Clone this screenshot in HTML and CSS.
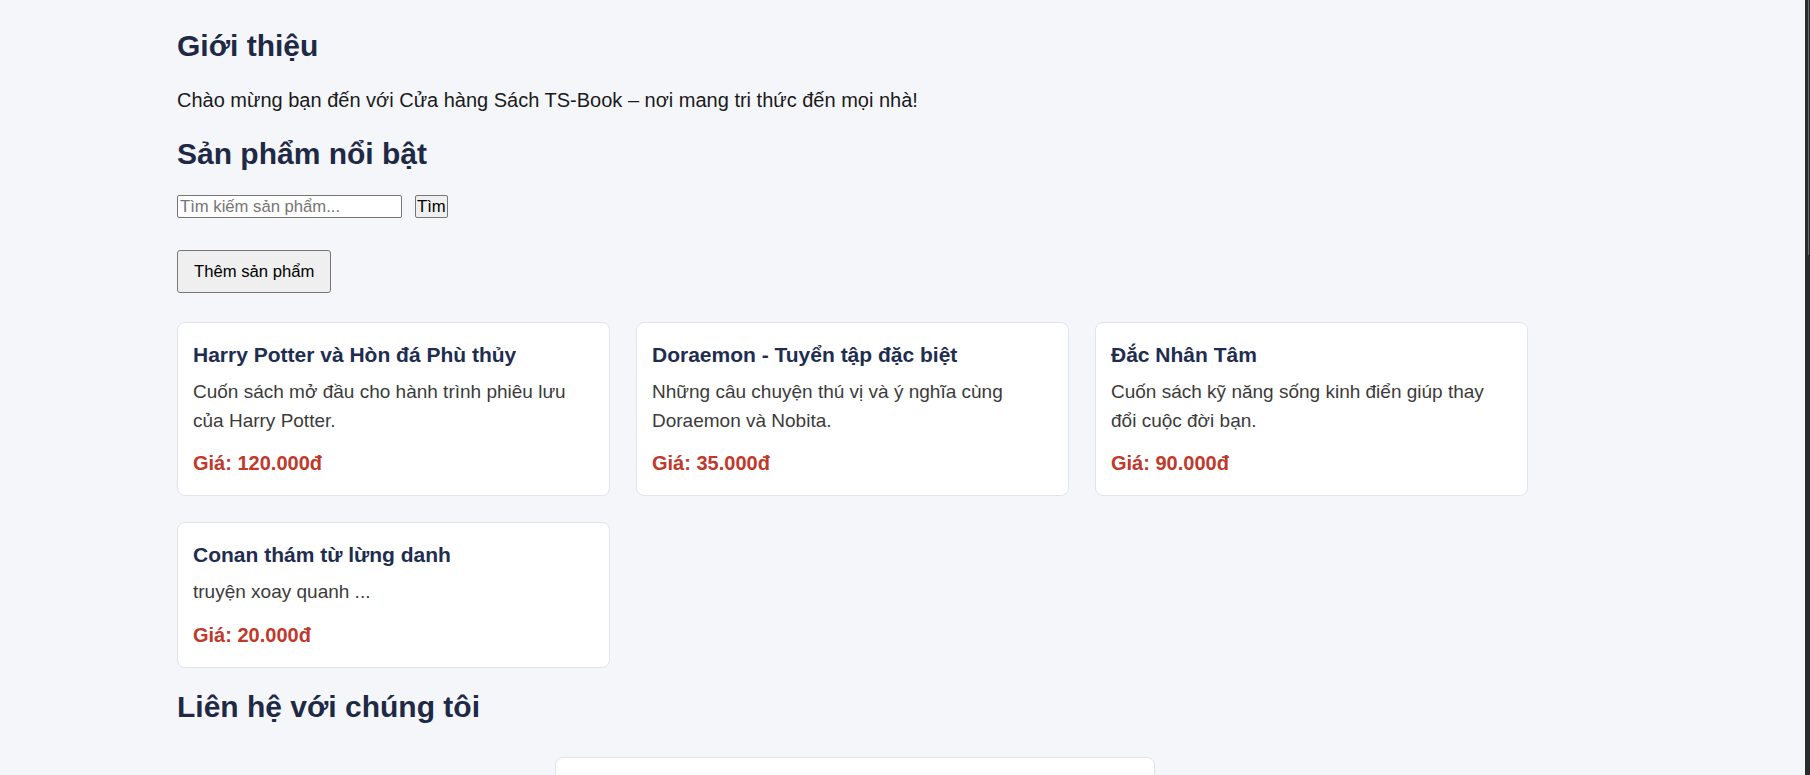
FILE: index.html
```html
<!DOCTYPE html>
<html lang="vi">
<head>
<meta charset="utf-8">
<title>Cửa hàng Sách TS-Book</title>
<link rel="stylesheet" href="styles.css">
</head>
<body>
<main class="container">
  <section class="intro">
    <h2 class="section-title first">Giới thiệu</h2>
    <p class="lead">Chào mừng bạn đến với Cửa hàng Sách TS-Book – nơi mang tri thức đến mọi nhà!</p>
  </section>

  <section class="products">
    <h2 class="section-title">Sản phẩm nổi bật</h2>
    <form class="search-row" onsubmit="return false">
      <input class="search-input" type="text" placeholder="Tìm kiếm sản phẩm...">
      <button class="search-btn" type="submit">Tìm</button>
    </form>
    <button class="add-btn" type="button">Thêm sản phẩm</button>

    <div class="grid">
      <article class="card">
        <h3 class="card-title">Harry Potter và Hòn đá Phù thủy</h3>
        <p class="card-desc">Cuốn sách mở đầu cho hành trình phiêu lưu của Harry Potter.</p>
        <p class="card-price">Giá: 120.000đ</p>
      </article>
      <article class="card">
        <h3 class="card-title">Doraemon - Tuyển tập đặc biệt</h3>
        <p class="card-desc">Những câu chuyện thú vị và ý nghĩa cùng Doraemon và Nobita.</p>
        <p class="card-price">Giá: 35.000đ</p>
      </article>
      <article class="card">
        <h3 class="card-title">Đắc Nhân Tâm</h3>
        <p class="card-desc">Cuốn sách kỹ năng sống kinh điển giúp thay đổi cuộc đời bạn.</p>
        <p class="card-price">Giá: 90.000đ</p>
      </article>
      <article class="card">
        <h3 class="card-title">Conan thám từ lừng danh</h3>
        <p class="card-desc">truyện xoay quanh ...</p>
        <p class="card-price">Giá: 20.000đ</p>
      </article>
    </div>
  </section>

  <section class="contact">
    <h2 class="section-title contact-title">Liên hệ với chúng tôi</h2>
    <form class="contact-form" onsubmit="return false">
      <label class="field-label">Họ và tên</label>
      <input class="field-input" type="text">
      <label class="field-label">Email</label>
      <input class="field-input" type="email">
      <label class="field-label">Nội dung</label>
      <textarea class="field-area" rows="6"></textarea>
      <button class="send-btn" type="submit">Gửi</button>
    </form>
  </section>
</main>
<div class="fake-scrollbar"><div class="fake-thumb"></div></div>
</body>
</html>
```

FILE: styles.css
```css
html {
  scrollbar-width: none;
}
html::-webkit-scrollbar {
  display: none;
}
body {
  margin: 0;
  background: #f5f6fa;
  font-family: "Liberation Sans", Arial, sans-serif;
  color: #1a1a1a;
}
.container {
  width: 1356px;
  margin-left: 177px;
  padding-top: 29px;
  padding-bottom: 600px;
}
.section-title {
  font-size: 30px;
  font-weight: 700;
  line-height: 34.5px;
  color: #1e2a45;
  margin: 25px 0 25px;
}
.section-title.first {
  margin-top: 0;
}
.lead {
  font-size: 20px;
  line-height: 23px;
  margin: 0;
}
.products .section-title {
  margin-bottom: 24px;
}
.search-row {
  display: flex;
  gap: 13px;
  align-items: flex-start;
  margin: 0;
}
.search-input {
  box-sizing: border-box;
  width: 225px;
  height: 23px;
  padding: 1px 2px;
  border: 1px solid #767676;
  border-radius: 2px;
  font-family: "Liberation Sans", Arial, sans-serif;
  font-size: 16.67px;
  background: #fff;
}
.search-input::placeholder {
  color: #757575;
}
.search-btn {
  box-sizing: border-box;
  height: 23px;
  padding: 0 1px;
  border: 1px solid #767676;
  border-radius: 2px;
  background: #efefef;
  font-family: "Liberation Sans", Arial, sans-serif;
  font-size: 16.67px;
  color: #000;
}
.add-btn {
  display: block;
  box-sizing: border-box;
  height: 43px;
  margin-top: 32px;
  padding: 0 16px;
  border: 1px solid #767676;
  border-radius: 3px;
  background: #efefef;
  font-family: "Liberation Sans", Arial, sans-serif;
  font-size: 16.67px;
  color: #000;
}
.grid {
  display: grid;
  grid-template-columns: repeat(3, 433px);
  gap: 26px;
  margin-top: 29px;
}
.card {
  background: #fff;
  border: 1px solid #e1e4ee;
  border-radius: 8px;
  padding: 20px 20px 20px 15px;
}
.card-title {
  margin: 0 0 11px;
  font-size: 21px;
  line-height: 24px;
  font-weight: 700;
  color: #1e2d50;
}
.card-desc {
  margin: 0 0 17px;
  font-size: 19px;
  line-height: 28.5px;
  color: #3b3b3b;
}
.card-price {
  margin: 0;
  font-size: 20px;
  line-height: 23px;
  font-weight: 700;
  color: #c0392b;
}
.contact-title {
  margin-top: 22px;
  margin-bottom: 0;
}
.contact-form {
  width: 600px;
  box-sizing: border-box;
  margin: 33px auto 0;
  background: #fff;
  border: 1px solid #e1e4ee;
  border-radius: 8px;
  padding: 30px 25px 25px;
  display: flex;
  flex-direction: column;
  gap: 10px;
}
.field-label {
  font-size: 18px;
  color: #1e2a45;
}
.field-input,
.field-area {
  box-sizing: border-box;
  width: 100%;
  padding: 10px;
  border: 1px solid #ccc;
  border-radius: 5px;
  font-family: "Liberation Sans", Arial, sans-serif;
  font-size: 17px;
}
.send-btn {
  align-self: flex-start;
  padding: 12px 24px;
  border: none;
  border-radius: 5px;
  background: #1e2a45;
  color: #fff;
  font-family: "Liberation Sans", Arial, sans-serif;
  font-size: 17px;
}
.fake-scrollbar {
  position: fixed;
  top: 0;
  right: 0;
  width: 5px;
  height: 100%;
  background: #2b2b2b;
}
.fake-thumb {
  height: 255px;
  margin-left: 3px;
  width: 1px;
  background: #6b6b6b;
}
```
